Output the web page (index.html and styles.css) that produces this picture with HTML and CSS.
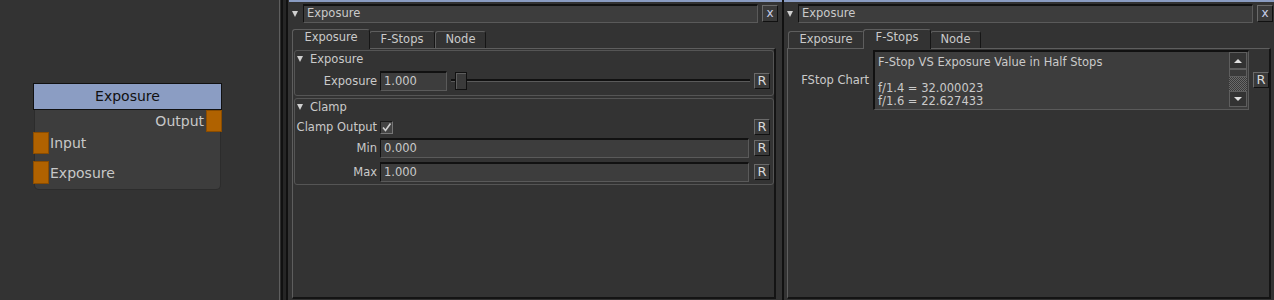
FILE: index.html
```html
<!DOCTYPE html>
<html lang="en">
<head>
    <meta charset="UTF-8" />
    <title>Exposure</title>
    <link rel="stylesheet" href="styles.css">
</head>
<body>
<div class="app">
    <!-- node graph -->
    <div class="graph">
        <div class="node">
            <div class="node-title">Exposure</div>
            <div class="node-body">
                <div class="port-row out"><span>Output</span><i class="port"></i></div>
                <div class="port-row in"><i class="port"></i><span>Input</span></div>
                <div class="port-row in last"><i class="port"></i><span>Exposure</span></div>
            </div>
        </div>
    </div>

    <div class="splitter"></div>

    <!-- properties: Exposure tab -->
    <div class="panel mid">
        <div class="strip"></div>
        <div class="head">
            <span class="tri"></span>
            <div class="name-field">Exposure</div>
            <button class="close">x</button>
        </div>
        <div class="tabs">
            <div class="tab active w1">Exposure</div>
            <div class="tab w2">F-Stops</div>
            <div class="tab w3">Node</div>
        </div>
        <div class="frame">
            <div class="group expo">
                <div class="group-head"><span class="tri"></span>Exposure</div>
                <div class="row tall">
                    <label class="lbl">Exposure</label>
                    <div class="field short">1.000</div>
                    <div class="slider"><span class="handle"></span></div>
                    <button class="rbtn">R</button>
                </div>
            </div>
            <div class="group">
                <div class="group-head"><span class="tri"></span>Clamp</div>
                <div class="row check-row">
                    <label class="lbl">Clamp Output</label>
                    <span class="check">
                        <svg width="11" height="11" viewBox="0 0 11 11"><path d="M2 5.5 L4.5 8.5 L9.5 1.5" fill="none" stroke="#d0d0d0" stroke-width="1.6"/></svg>
                    </span>
                    <button class="rbtn">R</button>
                </div>
                <div class="row tall min-row">
                    <label class="lbl">Min</label>
                    <div class="field wide">0.000</div>
                    <button class="rbtn">R</button>
                </div>
                <div class="row tall max-row">
                    <label class="lbl">Max</label>
                    <div class="field wide">1.000</div>
                    <button class="rbtn">R</button>
                </div>
            </div>
        </div>
    </div>

    <div class="divider"></div>

    <!-- properties: F-Stops tab -->
    <div class="panel right">
        <div class="strip"></div>
        <div class="head">
            <span class="tri"></span>
            <div class="name-field">Exposure</div>
            <button class="close">x</button>
        </div>
        <div class="tabs">
            <div class="tab w1">Exposure</div>
            <div class="tab active w2">F-Stops</div>
            <div class="tab w3">Node</div>
        </div>
        <div class="frame">
            <div class="chart-row">
                <label class="chart-lbl">FStop Chart</label>
                <div class="chart">
                    <div class="chart-text">F-Stop VS Exposure Value in Half Stops

f/1.4 = 32.000023
f/1.6 = 22.627433</div>
                    <div class="sb">
                        <span class="sb-btn up"></span>
                        <span class="sb-handle"></span>
                        <span class="sb-track"></span>
                        <span class="sb-btn down"></span>
                    </div>
                </div>
                <button class="rbtn">R</button>
            </div>
        </div>
    </div>
</div>
</body>
</html>
```

FILE: styles.css
```css
body {
    margin: 0;
    background: #333;
    font-family: "DejaVu Sans", sans-serif;
    font-size: 11.5px;
    color: #cacaca;
}

.app {
    display: flex;
    height: 300px;
    overflow: hidden;
}

/* node graph */
.graph {
    position: relative;
    width: 279px;
    flex: none;
    border-right: 1px solid #5e5e5e;
    background: #333;
}

.node {
    position: absolute;
    left: 33px;
    top: 83px;
    width: 189px;
}

.node-title {
    height: 25px;
    border: 1px solid #111;
    background: #8b9dc3;
    color: #111;
    font-size: 14px;
    line-height: 25px;
    text-align: center;
}

.node-body {
    margin-left: 1px;
    width: 185px;
    height: 79px;
    border: 1px solid #2c2c2c;
    border-top: none;
    border-radius: 0 0 5px 5px;
    background: #3d3d3d;
    font-size: 14px;
    color: #c8c8c8;
}

.port-row {
    display: flex;
    align-items: center;
    height: 22px;
}

.port-row.out {
    justify-content: flex-end;
    margin-right: -2px;
}

.port-row.out span {
    margin-right: 2px;
}

.port-row.in {
    margin-left: -2px;
}

.port-row.in span {
    margin-left: 1px;
}

.port-row.last {
    margin-top: 7px;
    height: 23px;
}

.port {
    width: 16px;
    height: 100%;
    box-sizing: border-box;
    border: 1px solid #8a4c00;
    background: #b06200;
}

.splitter {
    width: 8px;
    flex: none;
    background: linear-gradient(to right, #2a2a2a 0 1px, #111 1px 3px, #262626 3px 6px, #111 6px 8px);
}

.divider {
    width: 2px;
    flex: none;
    background: #111;
}

/* property panels */
.panel {
    display: flex;
    flex-direction: column;
    height: 300px;
    flex: none;
    box-sizing: border-box;
    background: #333;
}

.panel.mid {
    width: 494px;
    padding: 0 4px;
}

.panel.right {
    width: 490px;
    padding: 0 1px 0 3px;
}

.strip {
    height: 2px;
    margin: 0 -4px 0 -3px;
    background: #8a9cc2;
}

.right .strip {
    margin: 0 -1px 0 -3px;
}

.head {
    display: flex;
    align-items: center;
    height: 19px;
    margin-top: 2px;
}

.tri {
    width: 0;
    height: 0;
    flex: none;
    border-left: 3.5px solid transparent;
    border-right: 3.5px solid transparent;
    border-top: 6px solid #d0d0d0;
}

.head .tri {
    margin-right: 5px;
}

.name-field {
    flex: 1;
    height: 19px;
    box-sizing: border-box;
    border-style: solid;
    border-width: 2px 1px 1px 1px;
    border-color: #111 #5a5a5a #5a5a5a #111;
    background: #3d3d3d;
    padding-left: 3px;
    line-height: 15px;
}

.close {
    width: 16px;
    height: 17px;
    margin-left: 4px;
    padding: 0;
    box-sizing: border-box;
    border: 1px solid;
    border-color: #6a6a6a #111 #111 #6a6a6a;
    background: #3a3a3a;
    color: #c8d0e8;
    font: 12px "DejaVu Sans", sans-serif;
    line-height: 13px;
}

/* tabs */
.tabs {
    display: flex;
    align-items: flex-end;
    height: 19px;
    margin-top: 6px;
    padding-left: 1px;
    position: relative;
    z-index: 1;
}

.tab {
    height: 17px;
    box-sizing: border-box;
    border: 1px solid;
    border-bottom: none;
    border-color: #5e5e5e #161616 transparent #5e5e5e;
    border-radius: 3px 3px 0 0;
    background: #333;
    text-align: center;
    line-height: 15px;
}

.tab.w1 { width: 76px; }
.tab.w2 { width: 66px; }
.tab.w3 { width: 51px; }

.tab.active {
    height: 20px;
    margin: 0 -1px -1px;
    position: relative;
    z-index: 2;
}

.tab.active.w1 { width: 78px; }
.tab.active.w2 { width: 68px; }

.frame {
    flex: 1;
    margin: 0 2px 1px 0;
    border-style: solid;
    border-width: 1px 2px 2px 1px;
    border-color: #5e5e5e #141414 #141414 #5e5e5e;
    padding: 1px 0 0 1px;
}

/* groups */
.group {
    border: 1px solid #555;
    border-radius: 3px;
    padding: 0 3px 2px 0;
}

.group.expo {
    padding-bottom: 4px;
}

.group + .group {
    margin-top: 2px;
}

.group-head {
    display: flex;
    align-items: center;
    height: 16px;
    padding-left: 2px;
    line-height: 16px;
}

.group-head .tri {
    margin-right: 7px;
}

.row {
    display: flex;
    align-items: center;
    margin-top: 4px;
    height: 16px;
}

.row.tall {
    height: 20px;
}

.row.min-row {
    margin-top: 3px;
}

.lbl {
    width: 82px;
    margin-right: 3px;
    text-align: right;
    line-height: 16px;
    white-space: nowrap;
}

.field {
    height: 20px;
    box-sizing: border-box;
    border-style: solid;
    border-width: 2px 1px 1px 1px;
    border-color: #111 #5a5a5a #5a5a5a #111;
    background: #3d3d3d;
    padding-left: 3px;
    line-height: 17px;
}

.field.short {
    width: 67px;
    margin-right: 4px;
}

.field.wide {
    flex: 1;
    margin-right: 5px;
}

.slider {
    flex: 1;
    position: relative;
    height: 20px;
    margin-right: 4px;
}

.slider::before {
    content: "";
    position: absolute;
    left: 0;
    right: 0;
    top: 8px;
    height: 0;
    border-top: 2px solid #111;
    border-bottom: 1px solid #5a5a5a;
}

.handle {
    position: absolute;
    left: 4px;
    top: 1px;
    width: 12px;
    height: 18px;
    box-sizing: border-box;
    border: 1px solid #111;
    background: #3a3a3a;
    box-shadow: inset 1px 1px #5e5e5e;
}

.rbtn {
    width: 16px;
    height: 16px;
    flex: none;
    padding: 0;
    box-sizing: border-box;
    border: 1px solid;
    border-color: #6a6a6a #111 #111 #6a6a6a;
    background: #3a3a3a;
    color: #d8d8d8;
    font: 13px "DejaVu Sans", sans-serif;
    line-height: 14px;
    text-align: center;
    margin-left: auto;
}

.check {
    width: 13px;
    height: 13px;
    box-sizing: border-box;
    border: 1px solid;
    border-color: #1a1a1a #777 #777 #1a1a1a;
    background: #444;
    display: flex;
    align-items: center;
    justify-content: center;
}

.check svg {
    display: block;
}

/* f-stop chart */
.chart-row {
    display: flex;
    align-items: center;
}

.chart-lbl {
    width: 80px;
    margin-right: 4px;
    text-align: right;
    white-space: nowrap;
}

.chart {
    flex: 1;
    display: flex;
    height: 60px;
    box-sizing: border-box;
    border-style: solid;
    border-width: 2px 1px 1px 2px;
    border-color: #111 #5a5a5a #5a5a5a #111;
    background: #3d3d3d;
    overflow: hidden;
    margin-right: 4px;
}

.chart-text {
    flex: 1;
    padding: 4px 0 0 3px;
    line-height: 13px;
    white-space: pre;
    overflow: hidden;
}

.sb {
    width: 18px;
    margin-right: 1px;
    display: flex;
    flex-direction: column;
}

.sb-btn {
    height: 17px;
    box-sizing: border-box;
    border: 1px solid #5e5e5e;
    background: #333;
    display: flex;
    align-items: center;
    justify-content: center;
}

.sb-btn.down {
    height: 16px;
}

.sb-btn::after {
    content: "";
    border-left: 4px solid transparent;
    border-right: 4px solid transparent;
}

.sb-btn.up::after {
    border-bottom: 4px solid #e0e0e0;
}

.sb-btn.down::after {
    border-top: 4px solid #e0e0e0;
}

.sb-handle {
    height: 8px;
    box-sizing: border-box;
    border: 1px solid #5e5e5e;
    background: #3a3a3a;
}

.sb-track {
    height: 14px;
    background: repeating-conic-gradient(#6a6a6a 0 25%, #3a3a3a 0 50%) 0 0 / 2px 2px;
}
```
